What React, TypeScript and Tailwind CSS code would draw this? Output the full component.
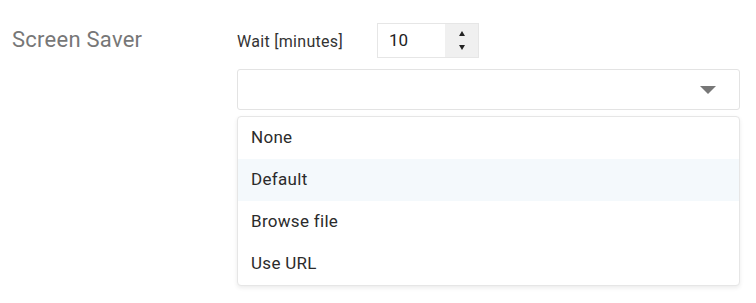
import { useState } from "react";

const options = ["None", "Default", "Browse file", "Use URL"];

export default function App() {
  const [wait, setWait] = useState(10);
  const active = "Default";

  return (
    <div className="w-[756px] h-[303px] bg-white font-['Roboto',sans-serif] relative">
      <div className="flex pt-[23px]">
        {/* label column */}
        <div className="w-[237px] pl-[12px] pt-[2px]">
          <span className="text-[22px] leading-[30px] tracking-[0.25px] text-[#777]">Screen Saver</span>
        </div>

        {/* controls */}
        <div className="w-[503px] flex flex-col">
          <div className="flex items-center h-[35px]">
            <span className="w-[140px] text-[16px] tracking-[0.3px] text-[#333] pt-[2px]">Wait [minutes]</span>
            <div className="flex h-[35px] w-[102px] border border-[#e6e6e6]">
              <span className="flex-1 pl-[11px] flex items-center text-[17px] text-[#222]">{wait}</span>
              <div className="w-[33px] bg-[#f0f0f0] flex flex-col items-center justify-center gap-[9px]">
                <button onClick={() => setWait(wait + 1)} className="w-0 h-0 border-x-[3.5px] border-x-transparent border-b-[5px] border-b-[#222]" />
                <button onClick={() => setWait(wait - 1)} className="w-0 h-0 border-x-[3.5px] border-x-transparent border-t-[5px] border-t-[#222]" />
              </div>
            </div>
          </div>

          <div className="mt-[11px] h-[41px] border border-[#e3e3e3] rounded-[3px] flex items-center justify-end pr-[23px]">
            <span className="w-0 h-0 border-x-[8px] border-x-transparent border-t-[8px] border-t-[#777]" />
          </div>

          <ul className="mt-[6px] border border-[#e6e6e6] rounded-[4px] shadow-[0_2px_4px_rgba(0,0,0,0.08)] bg-white overflow-hidden">
            {options.map((o) => (
              <li
                key={o}
                className={`h-[42px] flex items-center pl-[13px] text-[17px] tracking-[0.3px] text-[#2b2b2b] ${o === active ? "bg-[#f4f9fc]" : ""}`}
              >
                {o}
              </li>
            ))}
          </ul>
        </div>
      </div>
    </div>
  );
}
